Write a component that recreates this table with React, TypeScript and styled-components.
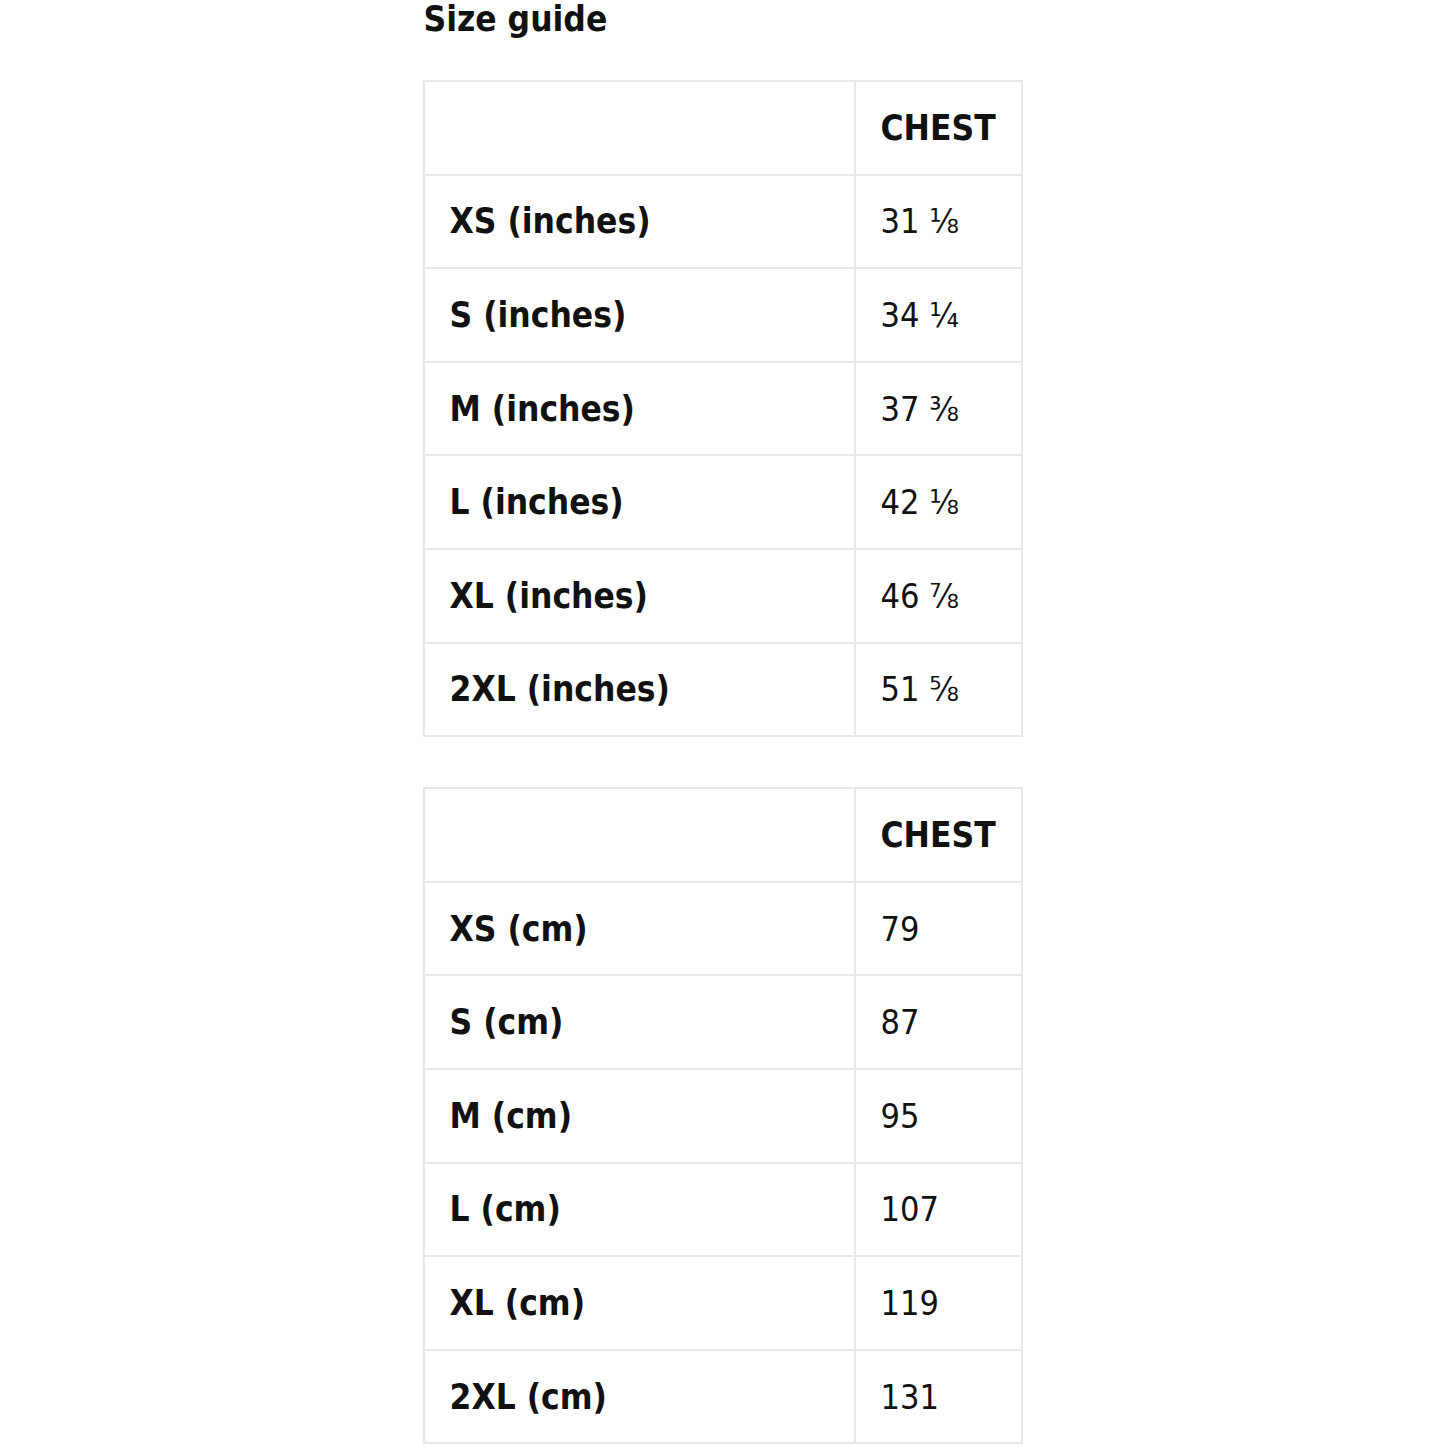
import { createGlobalStyle, styled } from "styled-components";

interface SizeRow {
  label: string;
  chest: string;
}

const inches: Array<SizeRow> = [
  { label: "XS (inches)", chest: "31 ⅛" },
  { label: "S (inches)", chest: "34 ¼" },
  { label: "M (inches)", chest: "37 ⅜" },
  { label: "L (inches)", chest: "42 ⅛" },
  { label: "XL (inches)", chest: "46 ⅞" },
  { label: "2XL (inches)", chest: "51 ⅝" },
];

const cm: Array<SizeRow> = [
  { label: "XS (cm)", chest: "79" },
  { label: "S (cm)", chest: "87" },
  { label: "M (cm)", chest: "95" },
  { label: "L (cm)", chest: "107" },
  { label: "XL (cm)", chest: "119" },
  { label: "2XL (cm)", chest: "131" },
];

function SizeTable({ rows }: { rows: Array<SizeRow> }) {
  return (
    <Table>
      <colgroup>
        <col style={{ width: 431 }} />
        <col />
      </colgroup>
      <tbody>
        <Row>
          <Cell />
          <HeadCell>CHEST</HeadCell>
        </Row>
        {rows.map((r) => (
          <Row key={r.label}>
            <LabelCell>{r.label}</LabelCell>
            <Cell>{r.chest}</Cell>
          </Row>
        ))}
      </tbody>
    </Table>
  );
}

export default function App() {
  return (
    <>
      <GlobalStyle />
      <Page>
        <Title>Size guide</Title>
        <SizeTable rows={inches} />
        <SizeTable rows={cm} />
      </Page>
    </>
  );
}

const GlobalStyle = createGlobalStyle`
  body {
    margin: 0;
    background: #fff;
    font-family: "DejaVu Sans Condensed", "DejaVu Sans", Verdana, sans-serif;
    color: #111;
  }
`;

const Page = styled.div`
  width: 600px;
  margin: 0 auto;
  display: flex;
  flex-direction: column;
  gap: 50px;
`;

const Title = styled.h2`
  margin: 0 0 -8px 1px;
  font-size: 35px;
  font-weight: bold;
  line-height: 38px;
`;

const Table = styled.table`
  width: 600px;
  border-collapse: collapse;
  table-layout: fixed;
  border: 2px solid #e7e7e7;
`;

const Row = styled.tr`
  height: 93.6px;
`;

const Cell = styled.td`
  border: 2px solid #e7e7e7;
  padding: 0 0 0 25px;
  font-size: 34px;
  font-weight: normal;
  vertical-align: middle;
  white-space: nowrap;
`;

const LabelCell = styled(Cell)`
  font-size: 35px;
  font-weight: bold;
`;

const HeadCell = styled(Cell)`
  font-size: 35px;
  font-weight: bold;
`;
